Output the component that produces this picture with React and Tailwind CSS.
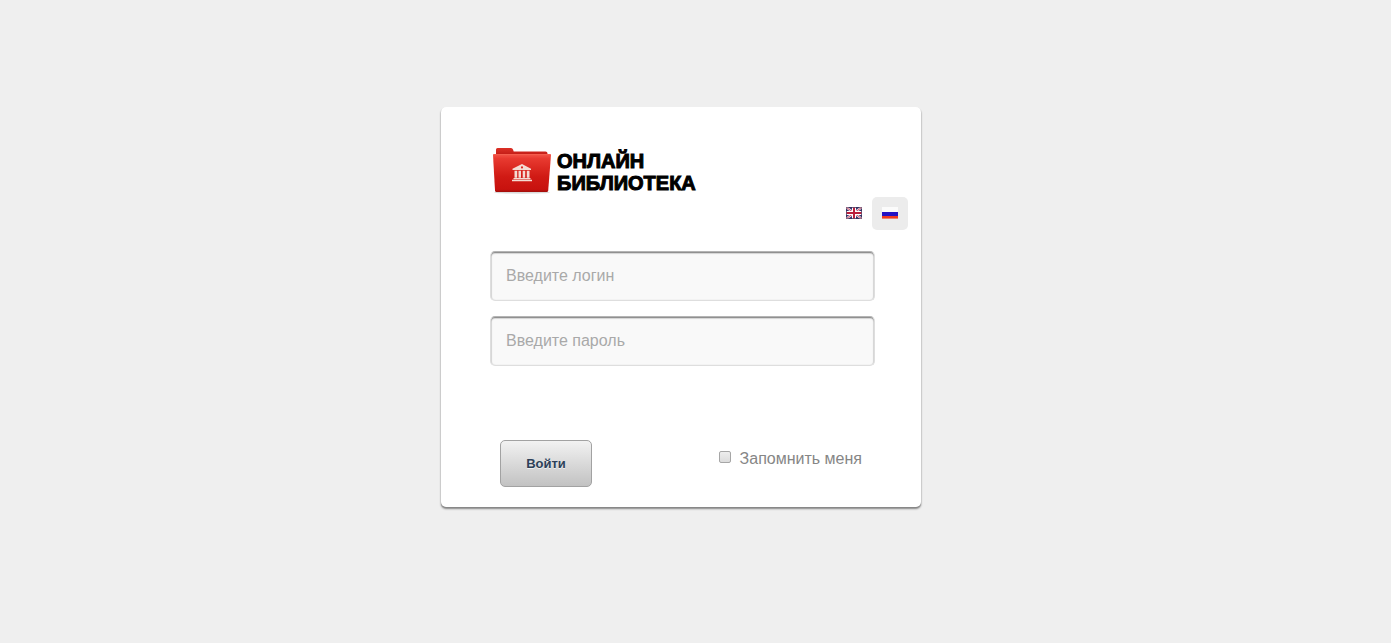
import React from "react";

function FolderLogo() {
  return (
    <svg className="h-[48px] w-[62px] shrink-0" viewBox="0 0 62 48" aria-hidden="true">
      <defs>
        <linearGradient id="front" x1="0" y1="0" x2="0" y2="1">
          <stop offset="0" stopColor="#f4564a" />
          <stop offset="0.12" stopColor="#e83a30" />
          <stop offset="0.6" stopColor="#d01a14" />
          <stop offset="0.93" stopColor="#c8120e" />
          <stop offset="1" stopColor="#9f0d0a" />
        </linearGradient>
        <linearGradient id="back" x1="0" y1="0" x2="0" y2="1">
          <stop offset="0" stopColor="#dc3026" />
          <stop offset="1" stopColor="#b5130f" />
        </linearGradient>
      </defs>
      <ellipse cx="31" cy="46.500" rx="28" ry="1.2" fill="#000" opacity="0.15" />
      <path d="M5 12V3.500Q5 2 6.500 2H20Q21.500 2 22 3.500L22.700 5.500H54.500Q56.500 5.500 56.500 7.500V12Z" fill="url(#back)" />
      <path d="M3 8Q2 8 2 9L4 44.500Q4.100 46 5.500 46H55.500Q57 46 57.200 44.500L60 9Q60 8 59 8Z" fill="url(#front)" />
      <path d="M2.800 8.500H59.200" stroke="#f4604f" strokeWidth="0.8" />
      <g fill="#f4dcd3">
        <path fillRule="evenodd" d="M31 18L40 22.800V24H21.500V22.800ZM31 20.300A1.100 1.100 0 1 0 31 22.500A1.100 1.100 0 1 0 31 20.300Z" />
        <path d="M23.500 24.800h2.700v7h-2.700zM27.500 24.800h2.500v7h-2.500zM31.700 24.800h2.500v7h-2.500zM35.800 24.800h2.700v7h-2.700z" />
        <path d="M22.500 32h17v1.200h-17zM21 33.700h20v1.500h-20z" />
      </g>
    </svg>
  );
}

function FlagGB() {
  return (
    <svg className="h-3 w-4" viewBox="0 0 16 12" aria-hidden="true">
      <rect width="16" height="12" rx="0.8" fill="#35356f" />
      <path d="M0.500 0.500L15.500 11.500M15.500 0.500L0.500 11.500" stroke="#f1e6ec" strokeWidth="2.4" />
      <path d="M0.500 0.500L15.500 11.500M15.500 0.500L0.500 11.500" stroke="#c4405c" strokeWidth="0.9" />
      <path d="M8 0.500V11.500M0.500 6H15.500" stroke="#fff" strokeWidth="4" />
      <path d="M8 0.500V11.500M0.500 6H15.500" stroke="#bb1f3c" strokeWidth="2" />
      <rect x="0.500" y="0.500" width="15" height="11" rx="0.500" fill="none" stroke="#3b2b4e" strokeOpacity="0.500" />
    </svg>
  );
}

function FlagRU() {
  return (
    <svg className="h-3 w-4" viewBox="0 0 16 12" aria-hidden="true">
      <rect width="16" height="5" fill="#fbfbfb" />
      <rect y="5" width="16" height="4" fill="#2413c4" />
      <rect y="9" width="16" height="2" fill="#f03a20" />
      <rect y="11" width="16" height="1" fill="#e88470" />
    </svg>
  );
}

function Field({ id, label, type }) {
  return (
    <input
      id={id}
      name={id}
      type={type}
      aria-label={label}
      placeholder={label}
      className="block h-[50px] w-full rounded-[5px] border border-[#dedede] border-t-[#b4b4b4] bg-[#f9f9f9] px-[15px] text-base text-[#555] shadow-[inset_0_1px_1px_#888,inset_0_2px_1px_#ddd,inset_1px_0_1px_#ddd,inset_-1px_0_1px_#ddd] placeholder:text-[#a9a9a9] placeholder:opacity-100"
    />
  );
}

export default function App() {
  return (
    <div className="flex min-h-screen items-start justify-center bg-[#efefef] pt-[107px] pr-[29px] font-['Liberation_Sans',Arial,sans-serif]">
      <main className="w-full max-w-[480px] rounded-[5px] bg-white pt-[39px] pb-5 shadow-[0_2px_2px_#888,0_1px_1px_#888]">
        <h1 className="flex items-center pl-[50px]">
          <FolderLogo />
          <span className="pt-1 pl-1 font-['Arial_Black','Liberation_Sans',sans-serif] text-[20px] leading-[22px] font-bold text-black [-webkit-text-stroke:1px_#000]">
            ОНЛАЙН
            <br />
            БИБЛИОТЕКА
          </span>
        </h1>
        <nav aria-label="Язык" className="mt-[3px] flex justify-end pr-[13px]">
          <a href="#en" aria-label="English" className="flex h-[33px] w-9 items-center justify-center rounded-[5px] pb-px">
            <FlagGB />
          </a>
          <a href="#ru" aria-label="Русский" className="flex h-[33px] w-9 items-center justify-center rounded-[5px] bg-[#ececec] pb-px">
            <FlagRU />
          </a>
        </nav>
        <form className="mt-[21px] pr-[46px] pl-[49px]" onSubmit={(e) => e.preventDefault()}>
          <div className="flex flex-col gap-[15px]">
            <Field id="login" label="Введите логин" type="text" />
            <Field id="password" label="Введите пароль" type="password" />
          </div>
          <div className="mt-[74px] flex items-start justify-between pr-[13px] pl-[10px]">
            <button
              type="submit"
              className="h-[47px] w-[92px] rounded-[5px] border border-[#a2a2a2] bg-gradient-to-b from-[#f2f2f2] to-[#c2c2c2] text-[13px] font-bold text-[#2d4159] [text-shadow:0_1px_0_#eee]"
            >
              Войти
            </button>
            <label className="flex items-center gap-[9px] pt-[7px] text-base text-[#868686]">
              <input
                type="checkbox"
                className="-mt-1 size-3 appearance-none rounded-[2px] border border-[#a6a6a6] bg-gradient-to-b from-[#ededed] to-[#dcdcdc] checked:from-[#777] checked:to-[#555]"
              />
              Запомнить меня
            </label>
          </div>
        </form>
      </main>
    </div>
  );
}
